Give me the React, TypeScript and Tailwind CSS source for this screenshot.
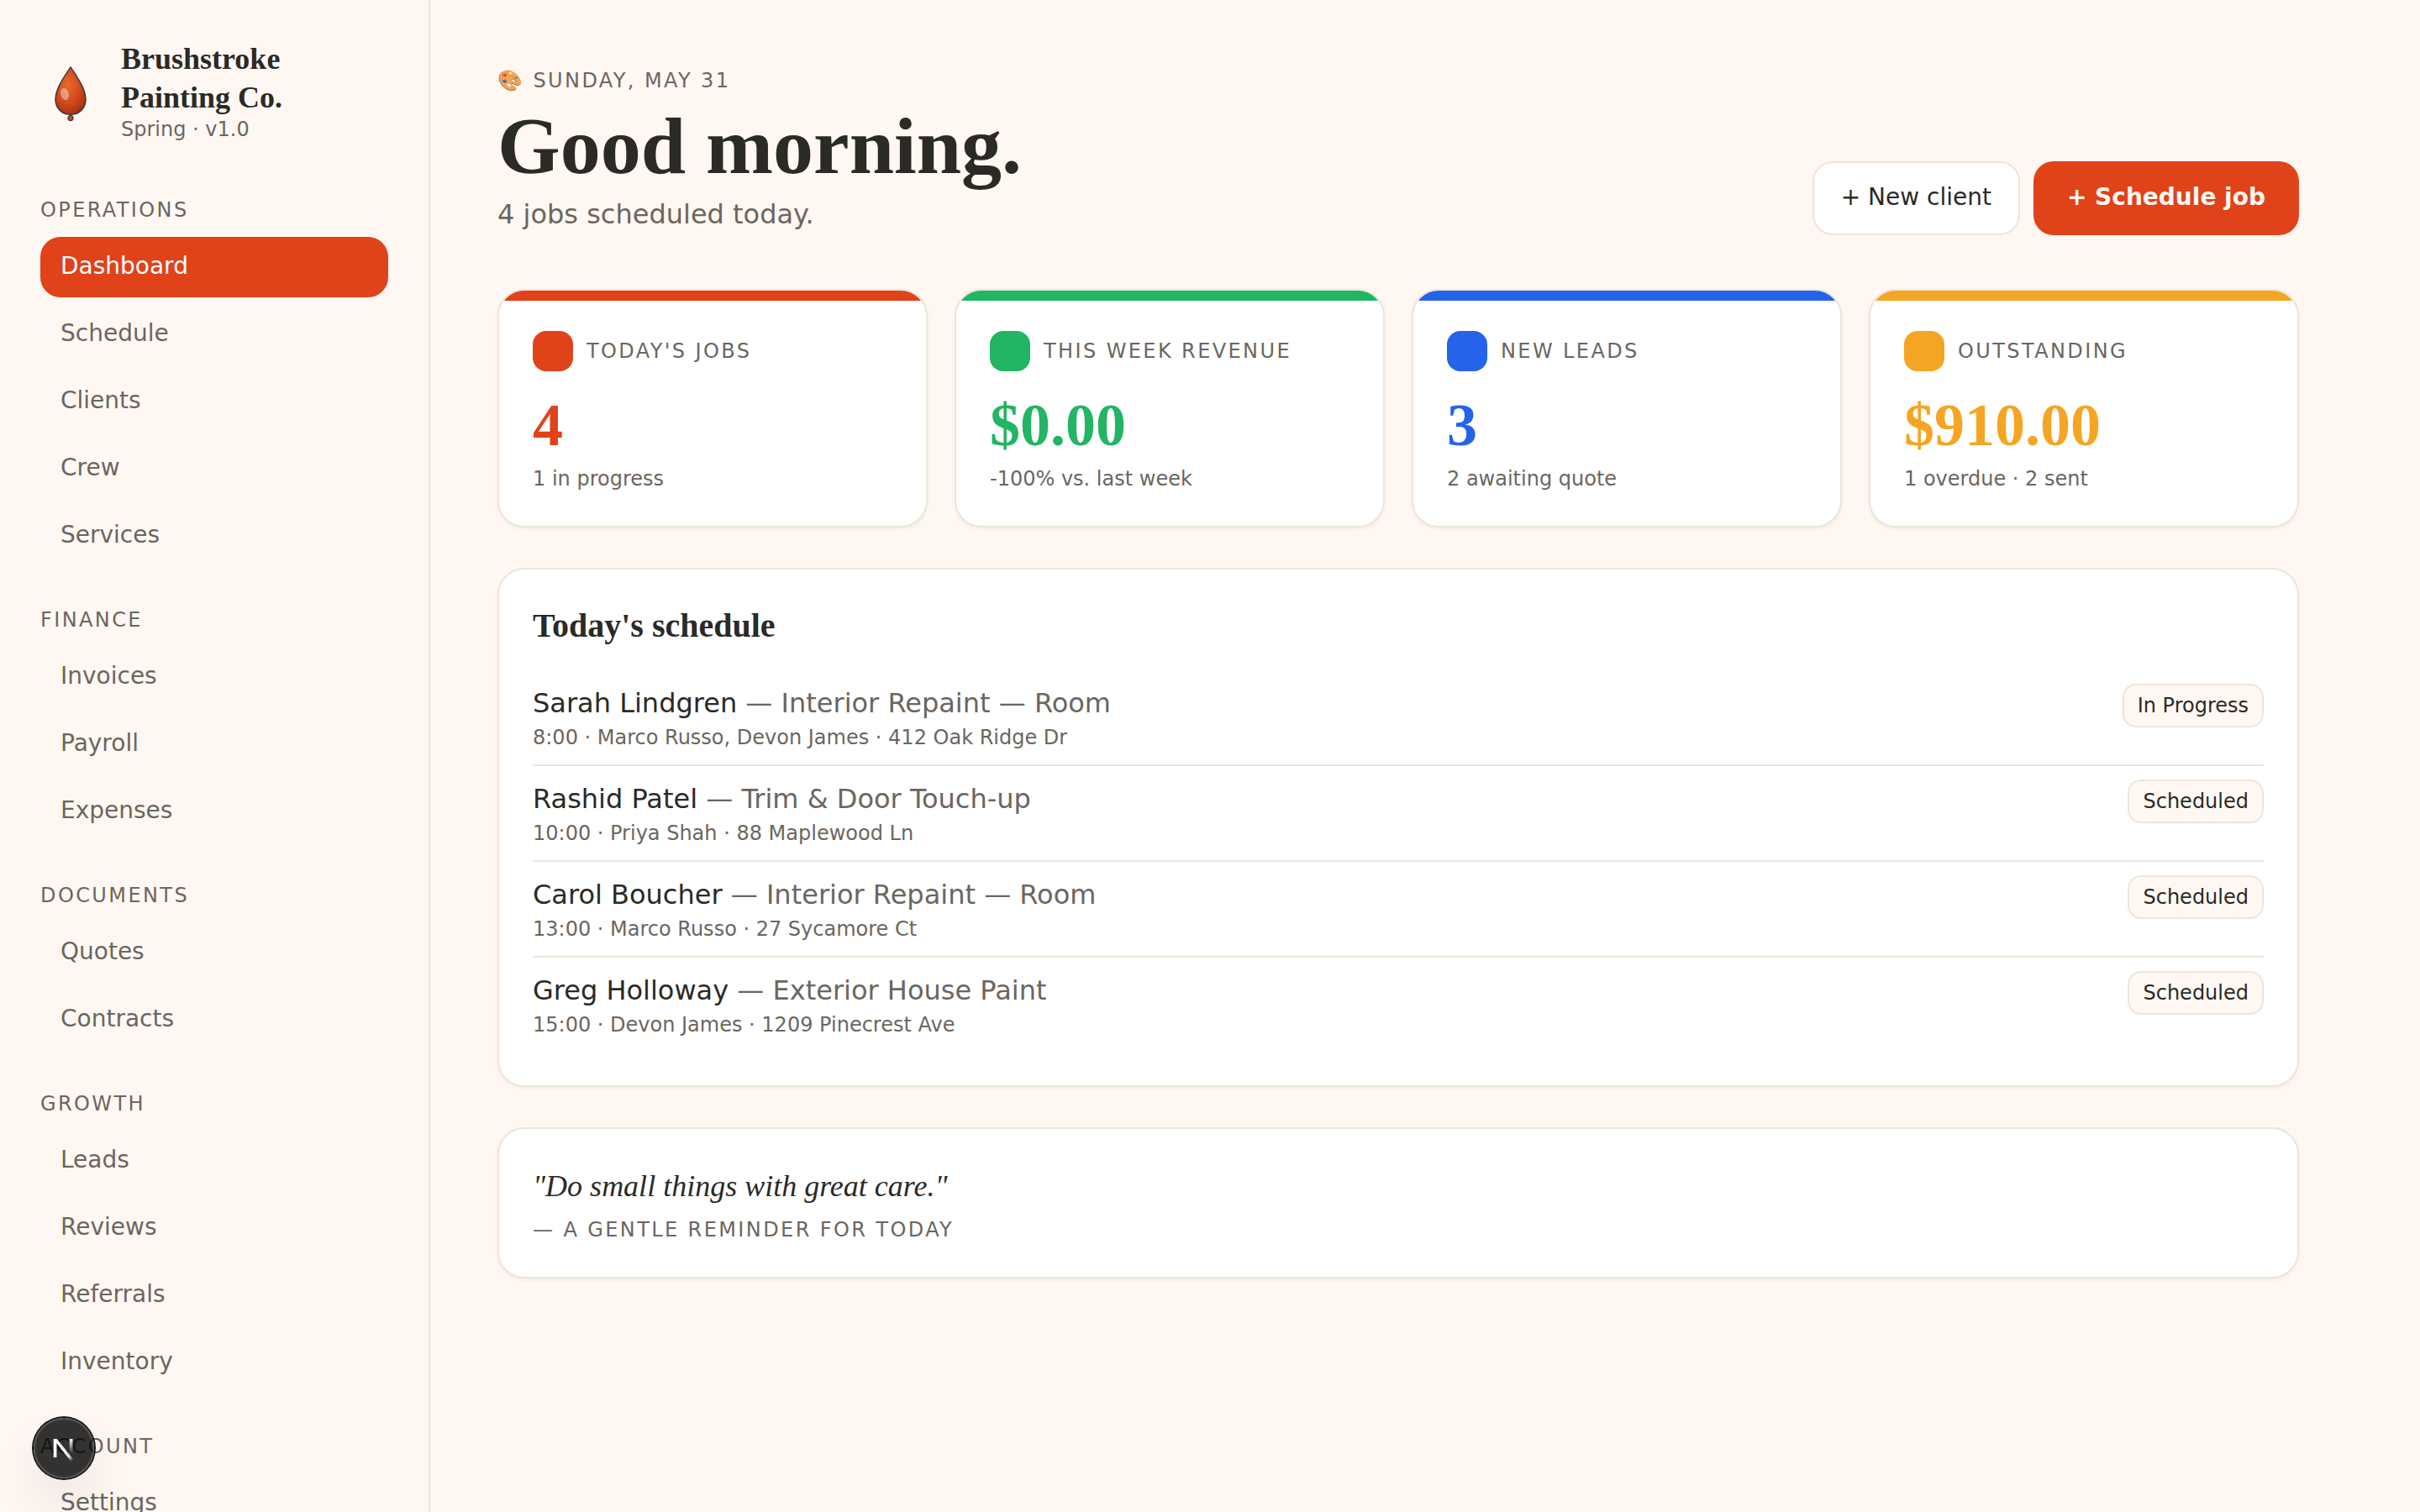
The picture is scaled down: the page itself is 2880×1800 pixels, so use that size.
import React from 'react';
import clsx from 'clsx';

interface NavGroup {
  title: string;
  items: string[];
}

interface Stat {
  label: string;
  value: string;
  hint: string;
  fill: string;
  text: string;
}

interface Job {
  client: string;
  service: string;
  details: string;
  status: string;
}

const navGroups: NavGroup[] = [
  { title: 'Operations', items: ['Dashboard', 'Schedule', 'Clients', 'Crew', 'Services'] },
  { title: 'Finance', items: ['Invoices', 'Payroll', 'Expenses'] },
  { title: 'Documents', items: ['Quotes', 'Contracts'] },
  { title: 'Growth', items: ['Leads', 'Reviews', 'Referrals', 'Inventory'] },
  { title: 'Account', items: ['Settings'] },
];

const stats: Stat[] = [
  { label: "Today's jobs", value: '4', hint: '1 in progress', fill: 'bg-[#e0421a]', text: 'text-[#e0421a]' },
  { label: 'This week revenue', value: '$0.00', hint: '-100% vs. last week', fill: 'bg-[#22b563]', text: 'text-[#22b563]' },
  { label: 'New leads', value: '3', hint: '2 awaiting quote', fill: 'bg-[#2563eb]', text: 'text-[#2563eb]' },
  { label: 'Outstanding', value: '$910.00', hint: '1 overdue · 2 sent', fill: 'bg-[#f5a524]', text: 'text-[#f5a524]' },
];

const jobs: Job[] = [
  { client: 'Sarah Lindgren', service: 'Interior Repaint — Room', details: '8:00 · Marco Russo, Devon James · 412 Oak Ridge Dr', status: 'In Progress' },
  { client: 'Rashid Patel', service: 'Trim & Door Touch-up', details: '10:00 · Priya Shah · 88 Maplewood Ln', status: 'Scheduled' },
  { client: 'Carol Boucher', service: 'Interior Repaint — Room', details: '13:00 · Marco Russo · 27 Sycamore Ct', status: 'Scheduled' },
  { client: 'Greg Holloway', service: 'Exterior House Paint', details: '15:00 · Devon James · 1209 Pinecrest Ave', status: 'Scheduled' },
];

const serif = "font-['Liberation_Serif',serif]";
const eyebrow = 'text-2xl leading-8 tracking-[0.1em] uppercase text-[#6b6660]';
const card = 'bg-white border-2 border-[#ede5d8] rounded-[32px] shadow-[0_2px_4px_rgba(43,42,38,0.06)]';

function DropLogo() {
  return (
    <svg className="w-18 h-18 shrink-0" viewBox="0 0 72 72" fill="none">
      <defs>
        <radialGradient id="drop" cx="0.42" cy="0.38" r="0.65">
          <stop offset="0" stopColor="#e96a2a" />
          <stop offset="0.6" stopColor="#d04a1c" />
          <stop offset="1" stopColor="#a33413" />
        </radialGradient>
      </defs>
      <path
        d="M36 6.8C29.5 17 18 32 18 45.5C18 56 26 63.3 36 63.3C46 63.3 54 56 54 45.5C54 32 42.5 17 36 6.8Z"
        fill="url(#drop)"
        stroke="#403a34"
        strokeWidth="1.5"
        strokeLinejoin="round"
      />
      <ellipse cx="29" cy="39" rx="4.8" ry="7.2" transform="rotate(-16 29 39)" fill="#fff" fillOpacity="0.4" />
      <circle cx="36" cy="67.6" r="3" fill="#d9441a" stroke="#403a34" strokeWidth="1.3" />
    </svg>
  );
}

function Sidebar() {
  return (
    <aside className="w-[512px] h-full shrink-0 overflow-hidden border-r-2 border-[#ede5d8] p-12">
      <div className="flex items-center gap-6 mb-16">
        <DropLogo />
        <div>
          <div className={clsx(serif, '-mt-px -mb-px text-4xl leading-[46px] font-bold')}>Brushstroke Painting Co.</div>
          <div className="text-2xl leading-8 text-[#6b6660]">Spring · v1.0</div>
        </div>
      </div>
      <nav className="flex flex-col gap-12">
        {navGroups.map((group) => (
          <div key={group.title}>
            <div className={clsx(eyebrow, 'mb-4')}>{group.title}</div>
            <ul className="flex flex-col gap-2">
              {group.items.map((item) => (
                <li
                  key={item}
                  className={clsx(
                    'rounded-3xl px-6 pt-[15px] pb-[17px] text-[28px] leading-10',
                    item === 'Dashboard' ? 'bg-[#e0421a] text-white' : 'text-[#6b6660]'
                  )}
                >
                  {item}
                </li>
              ))}
            </ul>
          </div>
        ))}
      </nav>
    </aside>
  );
}

function StatCard({ stat }: { stat: Stat }) {
  return (
    <div className={clsx(card, 'relative overflow-hidden px-10 pt-12 pb-10')}>
      <div className={clsx('absolute inset-x-0 top-0 h-3', stat.fill)} />
      <div className="flex items-center gap-4 mb-6">
        <span className={clsx('w-12 h-12 rounded-2xl', stat.fill)} />
        <span className={eyebrow}>{stat.label}</span>
      </div>
      <div className={clsx(serif, 'text-7xl leading-20 font-bold', stat.text)}>{stat.value}</div>
      <div className="mt-2 text-2xl leading-8 text-[#6b6660]">{stat.hint}</div>
    </div>
  );
}

function JobRow({ job }: { job: Job }) {
  return (
    <li className="flex items-start justify-between py-4 border-b-2 border-[#ede5d8] last:border-b-0">
      <div>
        <div className="mb-0.5 text-[32px] leading-[46px]">
          {job.client} <span className="text-[#6b6660]">— {job.service}</span>
        </div>
        <div className="text-2xl leading-8 text-[#6b6660]">{job.details}</div>
      </div>
      <span className="rounded-2xl border-2 border-[#ede5d8] bg-[#fff8f2] px-4 py-2 text-2xl leading-8">
        {job.status}
      </span>
    </li>
  );
}

function DevBadge() {
  return (
    <div className="fixed left-10 bottom-10 w-18 h-18 rounded-full bg-black/80 shadow-[0_0_0_2px_#171717,inset_0_0_0_2px_rgba(255,255,255,0.14),0_32px_64px_-16px_rgba(0,0,0,0.24)]">
      <svg className="w-full h-full" viewBox="0 0 72 72" fill="none">
        <defs>
          <linearGradient id="diag" x1="37" y1="38" x2="46.5" y2="51" gradientUnits="userSpaceOnUse">
            <stop stopColor="#fff" />
            <stop offset="0.6" stopColor="#fff" stopOpacity="0.8" />
            <stop offset="1" stopColor="#fff" stopOpacity="0" />
          </linearGradient>
          <linearGradient id="stem" x1="44.5" y1="25" x2="44.5" y2="42" gradientUnits="userSpaceOnUse">
            <stop stopColor="#fff" />
            <stop offset="1" stopColor="#fff" stopOpacity="0" />
          </linearGradient>
        </defs>
        <path d="M23.7 47V25H27.6L48 50.2L45 52.4L27.4 30V47Z" fill="url(#diag)" />
        <path d="M44.6 25V42" stroke="url(#stem)" strokeWidth="3.7" />
      </svg>
    </div>
  );
}

export default function App() {
  return (
    <div className="flex w-full h-screen overflow-hidden bg-[#fff8f2] text-[#2b2a26] font-['DejaVu_Sans',sans-serif]">
      <Sidebar />
      <main className="flex-1 pt-20 pl-20 pr-36">
        <header className="flex items-end justify-between mb-16">
          <div>
            <div className={eyebrow}>🎨 Sunday, May 31</div>
            <h1 className={clsx(serif, 'pt-1 text-8xl leading-[116px] font-bold')}>Good morning.</h1>
            <p className="mb-0.5 text-[32px] leading-[46px] text-[#6b6660]">4 jobs scheduled today.</p>
          </div>
          <div className="flex gap-4 text-[28px] leading-10">
            <button className="h-22 rounded-3xl border-2 border-[#ede5d8] bg-white px-8 pb-0.5">+ New client</button>
            <button className="h-22 rounded-3xl bg-[#e0421a] px-10 pb-0.5 font-bold text-[#fff8f2]">+ Schedule job</button>
          </div>
        </header>

        <section className="grid grid-cols-4 gap-8 mb-12">
          {stats.map((stat) => (
            <StatCard key={stat.label} stat={stat} />
          ))}
        </section>

        <section className={clsx(card, 'p-10 mb-12')}>
          <h2 className={clsx(serif, 'mb-[26px] text-[40px] leading-[54px] font-bold')}>Today's schedule</h2>
          <ul>
            {jobs.map((job) => (
              <JobRow key={job.client} job={job} />
            ))}
          </ul>
        </section>

        <section className={clsx(card, 'p-10')}>
          <p className={clsx(serif, 'text-4xl leading-14 italic')}>"Do small things with great care."</p>
          <p className={clsx(eyebrow, 'mt-2')}>— A gentle reminder for today</p>
        </section>
      </main>
      <DevBadge />
    </div>
  );
}
